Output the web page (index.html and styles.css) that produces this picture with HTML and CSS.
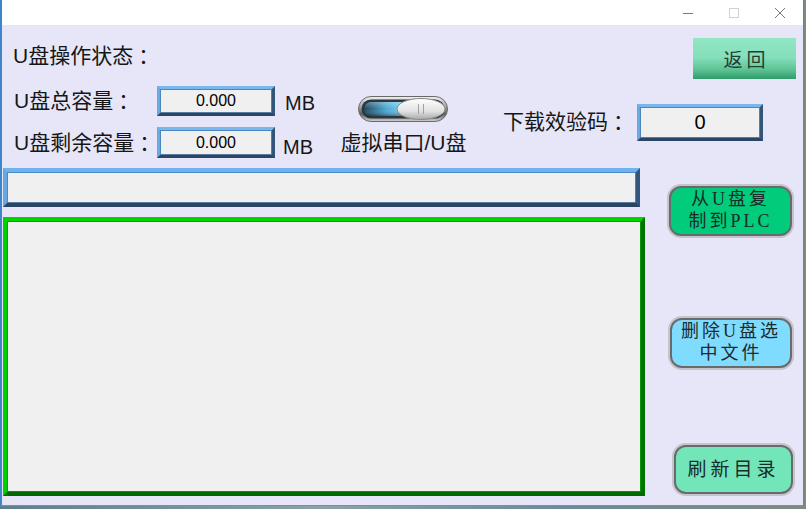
FILE: index.html
```html
<!DOCTYPE html>
<html lang="zh-CN">
<head>
<meta charset="utf-8">
<title>U盘操作</title>
<link rel="stylesheet" href="styles.css">
</head>
<body>
<div class="window">
  <div class="titlebar">
    <span class="ctl">
      <svg width="12" height="12" viewBox="0 0 12 12"><line x1="1" y1="6.5" x2="11" y2="6.5" stroke="#777" stroke-width="1"/></svg>
    </span>
    <span class="ctl">
      <svg width="12" height="12" viewBox="0 0 12 12"><rect x="1.5" y="1.5" width="9" height="9" fill="none" stroke="#d2d2d2" stroke-width="1"/></svg>
    </span>
    <span class="ctl">
      <svg width="12" height="12" viewBox="0 0 12 12"><path d="M1 1 L11 11 M11 1 L1 11" stroke="#777" stroke-width="1" fill="none"/></svg>
    </span>
  </div>
  <div class="content">
    <div class="row1">
      <span class="label">U盘操作状态<span class="colon">：</span></span>
      <button class="btn-back">返回</button>
    </div>
    <div class="row2">
      <div class="cap-grid">
        <span class="label">U盘总容量<span class="colon">：</span></span>
        <div class="field small">0.000</div>
        <span class="unit">MB</span>
        <span class="label">U盘剩余容量<span class="colon">：</span></span>
        <div class="field small tall">0.000</div>
        <span class="unit unit2">MB</span>
      </div>
      <div class="toggle-block">
        <svg class="toggle" width="90" height="26" viewBox="0 0 90 26">
          <defs>
            <linearGradient id="chrome" x1="0" y1="0" x2="0" y2="1">
              <stop offset="0" stop-color="#f2f2f2"/>
              <stop offset="0.45" stop-color="#9a9a9a"/>
              <stop offset="0.7" stop-color="#5e5e5e"/>
              <stop offset="1" stop-color="#d6d6d6"/>
            </linearGradient>
            <linearGradient id="blue" x1="0" y1="0" x2="1" y2="0">
              <stop offset="0" stop-color="#1d4458"/>
              <stop offset="0.45" stop-color="#4aa8d4"/>
              <stop offset="1" stop-color="#92e6ff"/>
            </linearGradient>
            <linearGradient id="blueV" x1="0" y1="0" x2="0" y2="1">
              <stop offset="0" stop-color="#ffffff" stop-opacity="0.3"/>
              <stop offset="0.5" stop-color="#ffffff" stop-opacity="0"/>
              <stop offset="1" stop-color="#000000" stop-opacity="0.35"/>
            </linearGradient>
            <linearGradient id="knob" x1="0" y1="0" x2="0" y2="1">
              <stop offset="0" stop-color="#ffffff"/>
              <stop offset="0.6" stop-color="#e2e2e2"/>
              <stop offset="1" stop-color="#a8a8a8"/>
            </linearGradient>
          </defs>
          <rect x="0.5" y="0.5" width="89" height="25" rx="12.5" fill="url(#chrome)" stroke="#6a6a6a"/>
          <rect x="3.5" y="3.5" width="83" height="19" rx="9.5" fill="#2a3640"/>
          <rect x="6" y="6" width="50" height="14" rx="7" fill="url(#blue)"/>
          <rect x="6" y="6" width="50" height="14" rx="7" fill="url(#blueV)"/>
          <ellipse cx="63" cy="13" rx="24" ry="10.5" fill="url(#knob)" stroke="#8a8a8a"/>
          <line x1="60.5" y1="8" x2="60.5" y2="18" stroke="#a0a0a0"/>
          <line x1="65.5" y1="8" x2="65.5" y2="18" stroke="#a0a0a0"/>
        </svg>
        <span class="caption">虚拟串口/U盘</span>
      </div>
      <div class="code-block">
        <span class="label code-label">下载效验码<span class="colon">：</span></span>
        <div class="field code">0</div>
      </div>
    </div>
    <div class="main">
      <div class="left">
        <div class="bar"></div>
        <div class="listbox"></div>
      </div>
      <div class="right">
        <button class="rbtn b1">从U盘复<br>制到PLC</button>
        <button class="rbtn b2">删除U盘选<br>中文件</button>
        <button class="rbtn b3">刷新目录</button>
      </div>
    </div>
  </div>
</div>
</body>
</html>
```

FILE: styles.css
```css
* { box-sizing: border-box; }
html, body { margin: 0; padding: 0; }
body {
  width: 806px;
  height: 509px;
  overflow: hidden;
  background: linear-gradient(90deg, #5d7f8c, #8aa2a8 40%, #6c8a98 70%, #7d8a80);
  font-family: "Liberation Sans", "Noto Sans CJK SC", sans-serif;
  color: #111;
}
.window {
  width: 804px;
  height: 506px;
  border-left: 2px solid #3c86c9;
  border-right: 1px solid #7c7c84;
  border-bottom: 1px solid #8a8a92;
  display: flex;
  flex-direction: column;
  background: #e6e6f8;
}
.titlebar {
  height: 25px;
  flex: none;
  background: #ffffff;
  display: flex;
  justify-content: flex-end;
  align-items: flex-start;
}
.ctl {
  width: 46px;
  height: 25px;
  display: flex;
  align-items: center;
  justify-content: center;
}
.ctl svg { display: block; }
.content {
  flex: 1;
  display: flex;
  flex-direction: column;
}
.label {
  font-size: 21px;
  line-height: 24px;
  color: #161616;
  white-space: nowrap;
}
.colon { margin-left: 5px; }
.row1 {
  margin-top: 13px;
  height: 41px;
  padding-left: 11px;
  padding-right: 7px;
  display: flex;
  justify-content: space-between;
  align-items: center;
}
.row1 .label { margin-top: -6px; }
.btn-back {
  width: 103px;
  height: 41px;
  border: none;
  padding: 0 0 0 4px;
  background: linear-gradient(#92e6c4 0%, #84dfba 48%, #5cc293 78%, #2f9a6c 100%);
  font-family: "Liberation Serif", "Noto Sans CJK SC", serif;
  font-size: 19px;
  letter-spacing: 4px;
  color: #243c33;
}
.row2 {
  margin-top: 7px;
  height: 72px;
  display: flex;
}
.cap-grid {
  width: 314px;
  padding-left: 12px;
  display: grid;
  grid-template-columns: 143px 118px auto;
  grid-template-rows: 30px 31px;
  row-gap: 11px;
  align-items: center;
}
.field {
  background: #f0f0f0;
  border: 3px solid;
  border-color: #78b6ec #33557a #2b4566 #6aa8e0;
  box-shadow: inset 1px 1px 0 #4a86c0, inset -1px -1px 0 #5c7c9e;
  display: flex;
  align-items: center;
  justify-content: center;
  color: #000;
}
.small {
  height: 30px;
  font-size: 16px;
}
.small.tall { height: 31px; }
.unit {
  margin-left: 10px;
  font-size: 20px;
  line-height: 24px;
  color: #161616;
  margin-top: 4px;
}
.unit2 { margin-left: 8px; margin-top: 8px; }
.toggle-block {
  width: 127px;
  margin-left: 24px;
  padding-top: 10px;
  display: flex;
  flex-direction: column;
  align-items: center;
}
.toggle { display: block; margin-left: -1px; }
.caption {
  margin-top: 9px;
  font-size: 21px;
  line-height: 24px;
  white-space: nowrap;
  color: #161616;
}
.code-block {
  margin-left: 36px;
  padding-top: 18px;
  display: flex;
  align-items: flex-start;
}
.code-label {
  width: 134px;
  margin-top: 6px;
}
.field.code {
  width: 126px;
  height: 37px;
  font-size: 20px;
}
.main {
  margin-top: 10px;
  display: flex;
  height: 328px;
}
.left {
  width: 643px;
  padding-left: 1px;
  display: flex;
  flex-direction: column;
}
.bar {
  width: 637px;
  height: 39px;
  background: #f0f0f0;
  border: 4px solid;
  border-color: #6eb2ee #33577c #2a4464 #68a8e2;
  box-shadow: inset 1px 1px 0 #4b8ac4, inset -1px -1px 0 #5a7a9c;
}
.listbox {
  margin-top: 10px;
  width: 642px;
  height: 279px;
  background: #f0f0f0;
  border: 4px solid;
  border-color: #00d400 #007200 #006a00 #00d000;
  box-shadow: inset 1px 1px 0 #00a800, inset -1px -1px 0 #009800;
}
.right {
  margin-left: 22px;
  display: flex;
  flex-direction: column;
  align-items: flex-start;
}
.rbtn {
  border: 2px solid #6a6a6c;
  box-shadow: 0 0 0 2px #c4c4cc;
  border-radius: 12px;
  padding: 0;
  font-family: "Liberation Serif", "Noto Sans CJK SC", serif;
  font-size: 18px;
  line-height: 22px;
  letter-spacing: 3px;
  color: #1c2a2a;
  text-align: center;
}
.b1 {
  width: 123px;
  height: 50px;
  margin-top: 18px;
  margin-left: 2px;
  background: #00cc7c;
  padding-bottom: 4px;
}
.b2 {
  width: 122px;
  height: 50px;
  margin-top: 82px;
  margin-left: 3px;
  background: #80dcff;
  padding-bottom: 2px;
}
.b3 {
  width: 119px;
  height: 49px;
  margin-top: 77px;
  margin-left: 7px;
  background: #72e6b8;
  font-size: 19px;
  letter-spacing: 4px;
}
```
